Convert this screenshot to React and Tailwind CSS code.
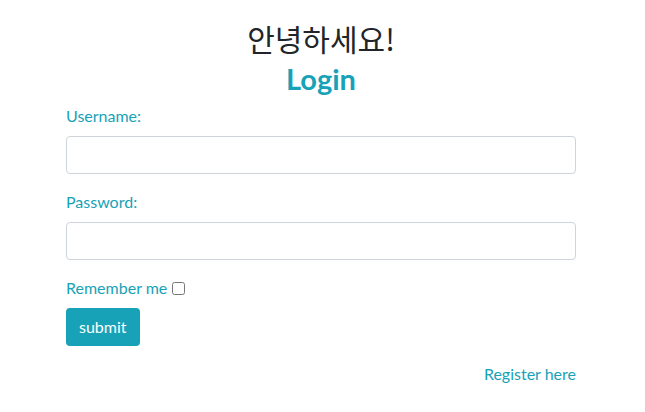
import React, { useState } from "react";

const App = () => {
  const [form, setForm] = useState({ username: "", password: "", remember: false });

  const handleChange = (e) => {
    const { name, value, type, checked } = e.target;
    setForm({ ...form, [name]: type === "checkbox" ? checked : value });
  };

  return (
    <div className="min-h-screen bg-white pl-[66px] font-['Lato','Noto_Sans_CJK_KR',sans-serif] text-[#212529]">
      <div className="w-[510px] pt-[21px]">
        <h3 className="text-center text-[30px] leading-[34px] mb-[7px] font-['Noto_Sans_CJK_KR','Lato',sans-serif]">
          안녕하세요!
        </h3>
        <h2 className="text-center text-[29px] leading-[34px] font-bold text-[#17a2b8] mb-[8px]">
          Login
        </h2>

        <form onSubmit={(e) => e.preventDefault()}>
          <div className="mb-4">
            <label className="block text-[16px] leading-6 text-[#17a2b8] mb-2">Username:</label>
            <input
              type="text"
              name="username"
              value={form.username}
              onChange={handleChange}
              className="block w-full h-[38px] px-3 border border-[#ced4da] rounded-[4px] outline-none"
            />
          </div>

          <div className="mb-4">
            <label className="block text-[16px] leading-6 text-[#17a2b8] mb-2">Password:</label>
            <input
              type="password"
              name="password"
              value={form.password}
              onChange={handleChange}
              className="block w-full h-[38px] px-3 border border-[#ced4da] rounded-[4px] outline-none"
            />
          </div>

          <div className="flex items-center text-[16px] leading-6 text-[#17a2b8] mb-2">
            <span>Remember me</span>
            <input
              type="checkbox"
              name="remember"
              checked={form.remember}
              onChange={handleChange}
              className="ml-[5px] w-[13px] h-[13px]"
            />
          </div>

          <button
            type="submit"
            className="h-[38px] px-[13px] bg-[#17a2b8] text-white text-[16px] rounded-[4px]"
          >
            submit
          </button>
        </form>

        <div className="flex justify-end mt-4">
          <a href="#" className="text-[16px] leading-6 text-[#17a2b8]">
            Register here
          </a>
        </div>
      </div>
    </div>
  );
};

export default App;
